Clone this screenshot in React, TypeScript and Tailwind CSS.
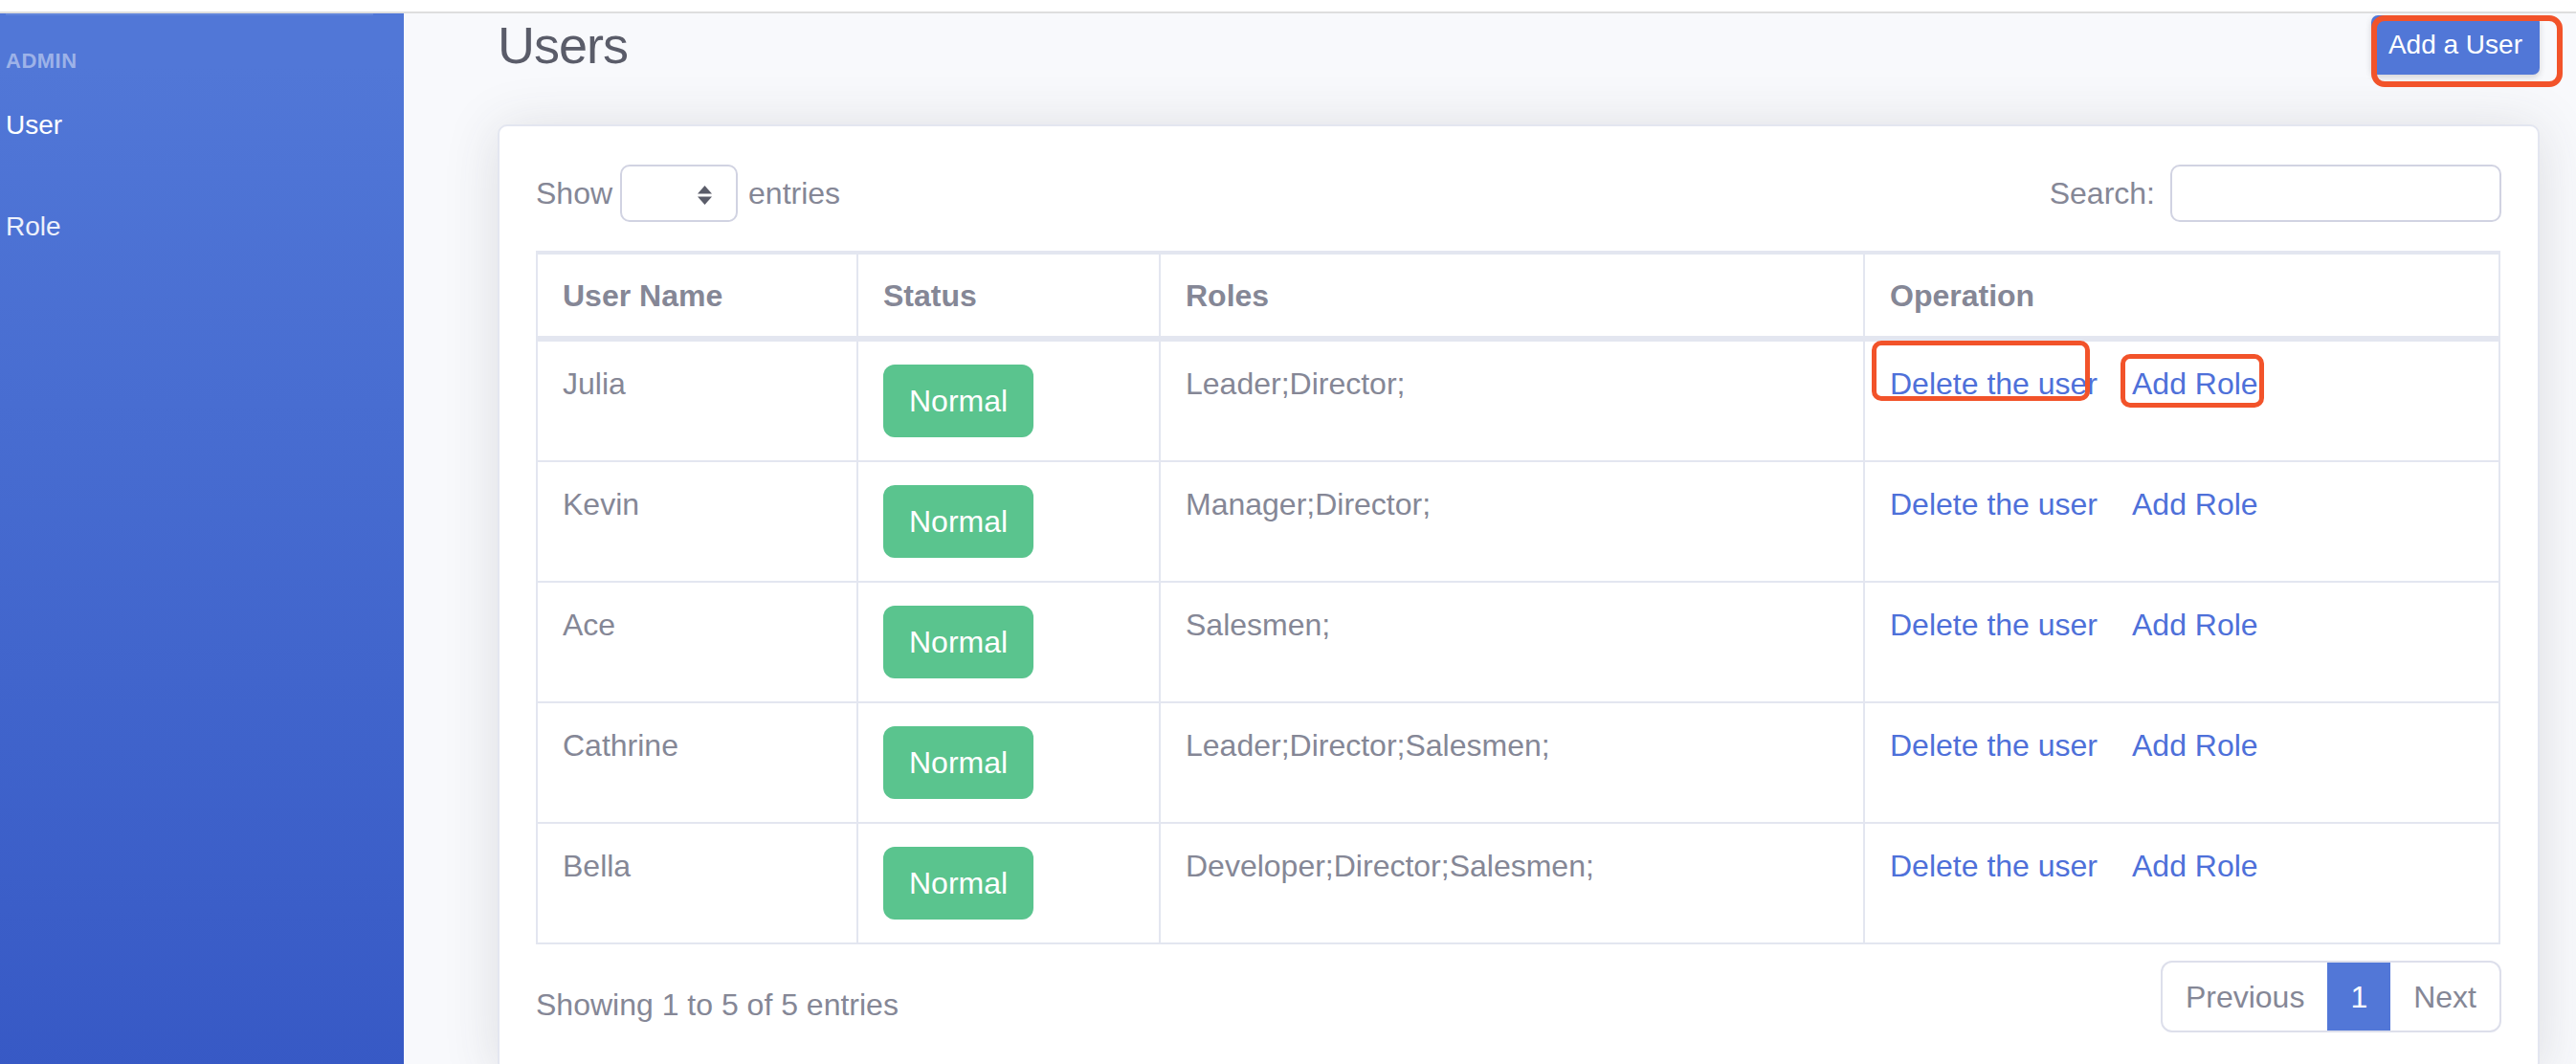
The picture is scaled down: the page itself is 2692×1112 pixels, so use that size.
import React from "react";

type UserRow = {
  name: string;
  status: string;
  roles: string;
};

const users: UserRow[] = [
  { name: "Julia", status: "Normal", roles: "Leader;Director;" },
  { name: "Kevin", status: "Normal", roles: "Manager;Director;" },
  { name: "Ace", status: "Normal", roles: "Salesmen;" },
  { name: "Cathrine", status: "Normal", roles: "Leader;Director;Salesmen;" },
  { name: "Bella", status: "Normal", roles: "Developer;Director;Salesmen;" },
];

const cols = "grid grid-cols-[337px_316px_736px_664px]";

function SelectArrows() {
  return (
    <svg width="15" height="20" viewBox="0 0 15 20" className="absolute right-[25px] top-[20px]">
      <path d="M7.5 0 L15 8.5 L0 8.5 Z" fill="#5a5c69" />
      <path d="M0 11.5 L15 11.5 L7.5 20 Z" fill="#5a5c69" />
    </svg>
  );
}

export default function App() {
  return (
    <div className="min-h-screen flex flex-col font-['Liberation_Sans',Arial,sans-serif] bg-[#f8f9fc]">
      {/* top strip */}
      <div className="h-[14px] shrink-0 bg-white border-b-2 border-[#dedede]" />

      <div className="flex flex-1">
        {/* sidebar */}
        <aside className="w-[422px] shrink-0 bg-linear-to-b from-[#5177d7] from-[5%] to-[#3759c5] pl-[6px]">
          <div className="h-[2px] w-[384px] bg-white/10" />
          <div className="mt-[31px] text-[22px] leading-[33px] font-bold uppercase tracking-[0.5px] text-white/45">
            Admin
          </div>
          <div className="mt-[30px] text-[28px] leading-[42px] text-white">User</div>
          <div className="mt-[64px] text-[28px] leading-[42px] text-white/90">Role</div>
        </aside>

        {/* main */}
        <main className="flex-1 pl-[98px] pr-[38px]">
          <div className="h-[66px] flex items-center justify-between">
            <h1 className="text-[54px] leading-[65px] tracking-[-1px] text-[#5a5c69]">Users</h1>
            <div className="relative">
              <button
                type="button"
                className="h-[62px] px-[18px] rounded-[7px] bg-[#5177d7] text-white text-[28px] leading-[42px] shadow-[0_3px_6px_rgba(58,59,69,0.2)]"
              >
                Add a User
              </button>
              <div className="absolute left-0 top-0 w-[200px] h-[75px] border-[6px] border-[#f2532a] rounded-[14px]" />
            </div>
          </div>

          <div className="mt-[50px] bg-white border-2 border-[#e3e6f0] rounded-[10px] shadow-[0_4px_56px_rgba(58,59,69,0.15)] px-[38px] pt-[40px] pb-[40px] text-[32px] text-[#858796]">
            {/* controls */}
            <div className="h-[60px] flex items-center justify-between">
              <div className="flex items-center">
                <span className="leading-[40px]">Show</span>
                <div className="relative ml-[8px] w-[123px] h-[60px] border-2 border-[#d1d3e2] rounded-[10px] bg-white">
                  <SelectArrows />
                </div>
                <span className="ml-[11px] leading-[40px]">entries</span>
              </div>
              <div className="flex items-center gap-[16px]">
                <span className="leading-[40px]">Search:</span>
                <input className="w-[346px] h-[60px] border-2 border-[#d1d3e2] rounded-[10px] bg-white outline-none" />
              </div>
            </div>

            {/* table */}
            <div className="mt-[30px]">
              <div className={cols}>
                {["User Name", "Status", "Roles", "Operation"].map((h, i) => (
                  <div
                    key={h}
                    className={
                      "h-[95px] flex items-center pl-[26px] border-t-4 border-b-[6px] border-r-2 border-[#e3e6f0] font-bold " +
                      (i === 0 ? "border-l-2" : "")
                    }
                  >
                    {h}
                  </div>
                ))}
              </div>

              {users.map((u, idx) => (
                <div key={u.name} className={cols}>
                  <div className="h-[126px] pt-[24px] pl-[26px] leading-[40px] border-l-2 border-r-2 border-b-2 border-[#e3e6f0]">
                    {u.name}
                  </div>
                  <div className="h-[126px] pt-[24px] pl-[26px] border-r-2 border-b-2 border-[#e3e6f0]">
                    <span className="inline-flex items-center justify-center h-[76px] px-[27px] rounded-[12px] bg-[#5ac48e] text-white leading-[40px]">
                      {u.status}
                    </span>
                  </div>
                  <div className="h-[126px] pt-[24px] pl-[26px] leading-[40px] border-r-2 border-b-2 border-[#e3e6f0]">
                    {u.roles}
                  </div>
                  <div className="relative h-[126px] pt-[24px] pl-[26px] leading-[40px] border-r-2 border-b-2 border-[#e3e6f0] text-[#4e70d9]">
                    <a href="#" className="mr-[36px]">Delete the user</a>
                    <a href="#">Add Role</a>
                    {idx === 0 ? (
                      <>
                        <div className="absolute left-[7px] top-[-1px] w-[228px] h-[63px] border-[5px] border-[#f2532a] rounded-[10px]" />
                        <div className="absolute left-[267px] top-[13px] w-[150px] h-[56px] border-[5px] border-[#f2532a] rounded-[10px]" />
                      </>
                    ) : null}
                  </div>
                </div>
              ))}
            </div>

            {/* footer */}
            <div className="mt-[17px] flex items-start justify-between">
              <div className="pt-[22px] leading-[48px]">Showing 1 to 5 of 5 entries</div>
              <nav className="flex h-[75px] rounded-[12px] border-2 border-[#dddfeb] overflow-hidden">
                <a href="#" className="flex items-center px-[24px] leading-[40px]">Previous</a>
                <a href="#" className="flex items-center px-[24px] -my-[2px] bg-[#5277d7] text-white leading-[40px]">1</a>
                <a href="#" className="flex items-center px-[24px] leading-[40px]">Next</a>
              </nav>
            </div>
          </div>
        </main>
      </div>
    </div>
  );
}
